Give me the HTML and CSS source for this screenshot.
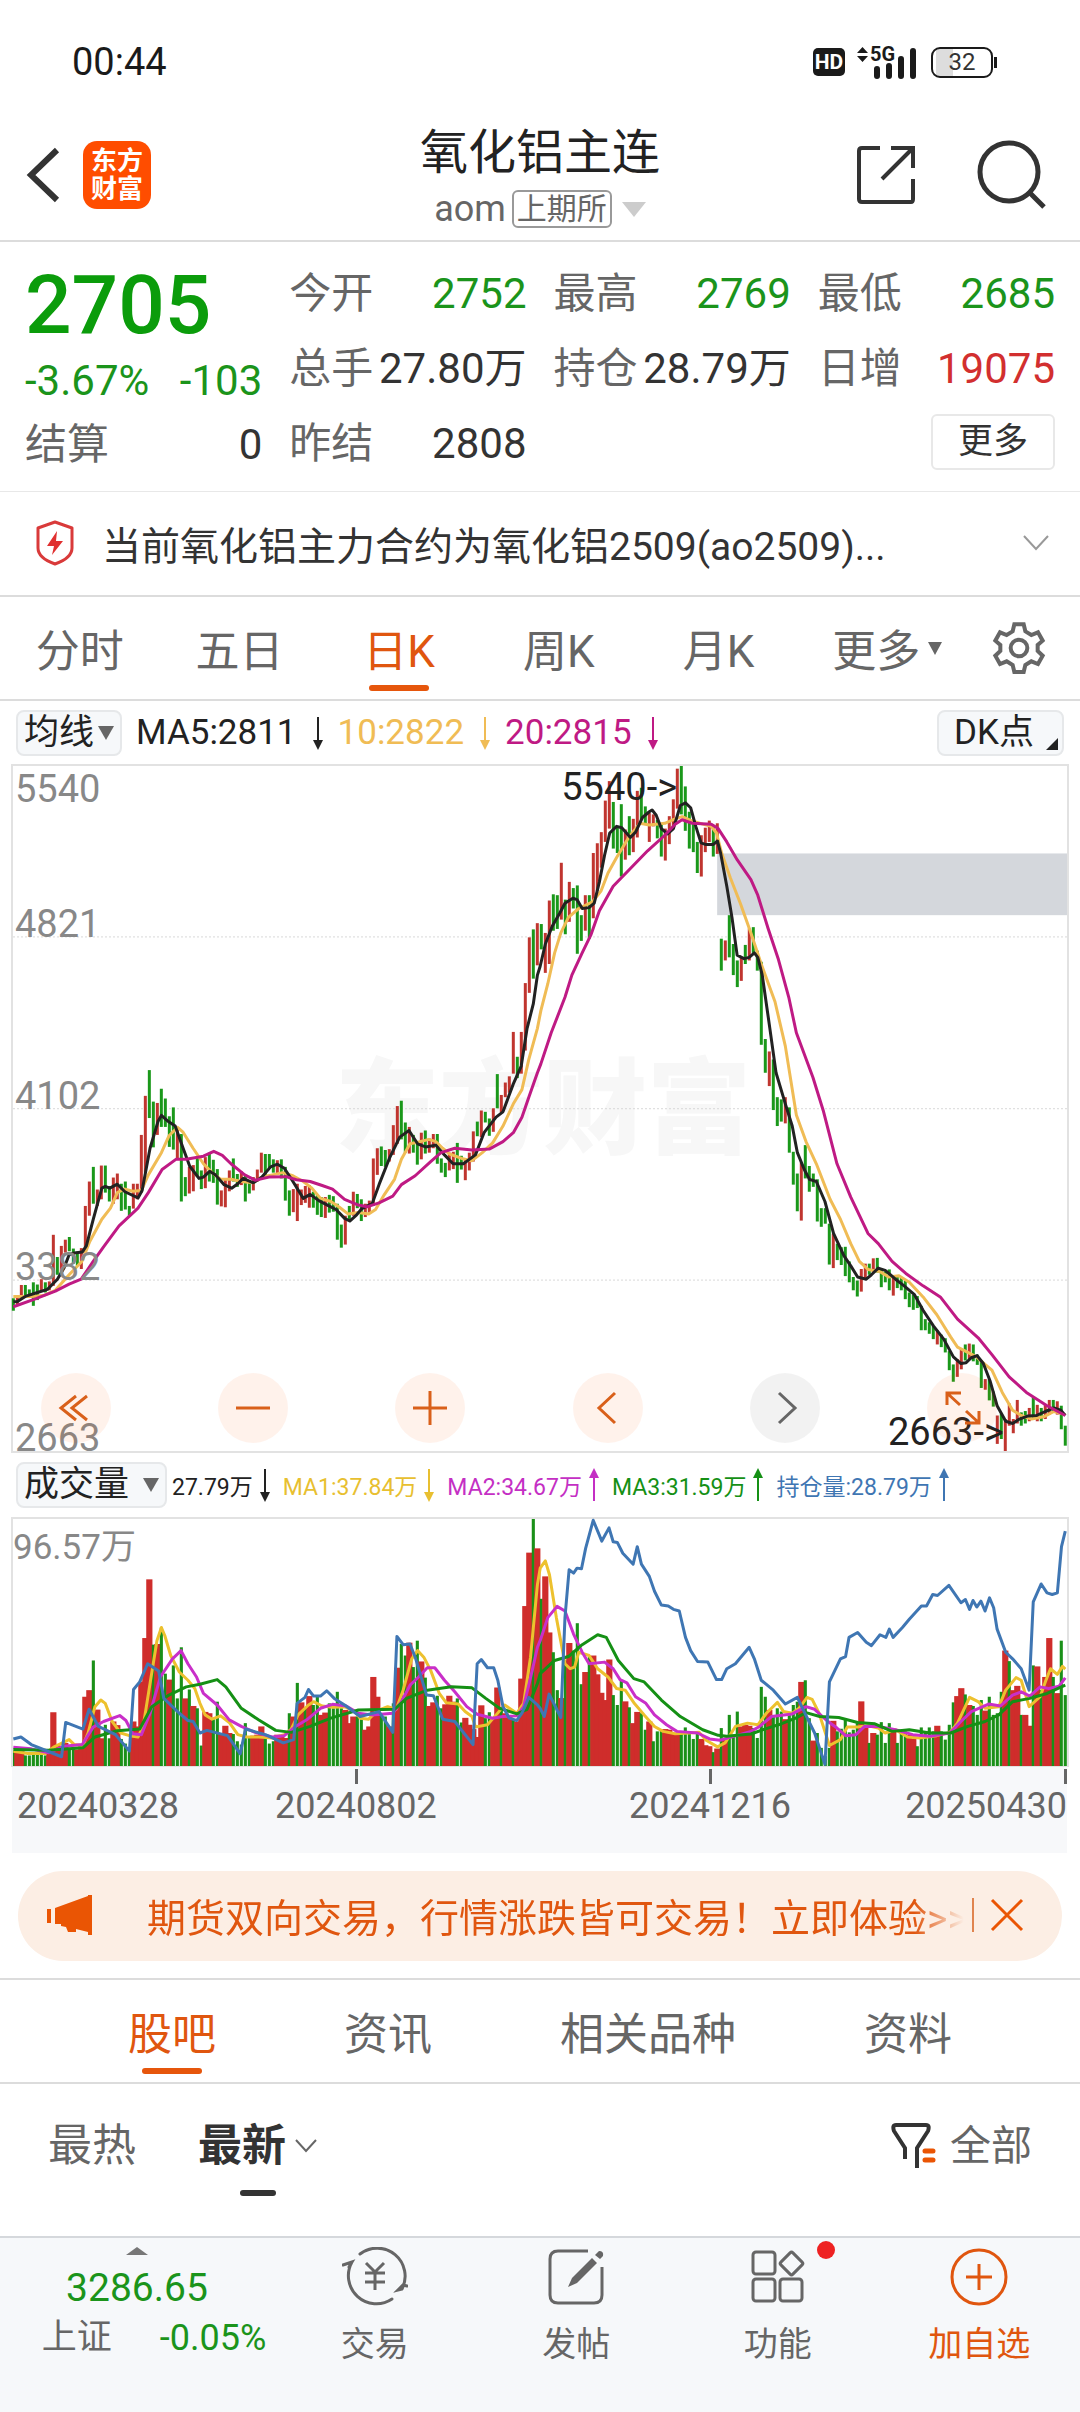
FILE: index.html
```html
<!DOCTYPE html>
<html lang="zh-CN">
<head>
  <meta charset="UTF-8">
  <meta name="viewport" content="width=device-width, initial-scale=1.0">
  <title>氧化铝主连</title>
  <link rel="stylesheet" href="styles.css">
</head>
<body>
  <div class="status">
    <span class="time">00:44</span>
    <div class="status-icons">
      <span class="hd">HD</span>
      <span class="signal">
        <svg width="62" height="36" viewBox="0 0 62 36">
          <path d="M0 9L5.500 3L11 9ZM0 12H11L5.500 18Z" fill="#1a1a1a"/>
          <path d="M20 25V32M32 22V32M44 15V32M56 7V32" stroke="#1a1a1a" stroke-width="6" stroke-linecap="round"/>
        </svg>
        <b>5G</b>
      </span>
      <span class="battery">32</span>
    </div>
  </div>

  <header>
    <div class="head-left">
      <button aria-label="返回">
        <svg width="36" height="56" viewBox="0 0 36 56"><path d="M31 3L5 28L31 53" fill="none" stroke="#333" stroke-width="6"/></svg>
      </button>
      <a class="logo" href="#">东方<br>财富</a>
    </div>
    <div class="head-title">
      <h1>氧化铝主连</h1>
      <div class="code">aom<span class="exchange">上期所</span><i class="tri"></i></div>
    </div>
    <div class="head-right">
      <button aria-label="分享">
        <svg width="60" height="60" viewBox="0 0 60 60" fill="none" stroke="#333" stroke-width="4"><path d="M24 3H6Q3 3 3 6V54Q3 57 6 57H55Q57 57 57 54V34M35 3H57V23M57 3L26 34"/></svg>
      </button>
      <button aria-label="搜索">
        <svg width="70" height="70" viewBox="0 0 70 70" fill="none" stroke="#333" stroke-width="5"><circle cx="33" cy="32" r="29"/><path d="M54 53L68 67"/></svg>
      </button>
    </div>
  </header>

  <section class="quote">
    <div class="quote-main">
      <strong class="price">2705</strong>
      <div class="change"><span>-3.67%</span><span>-103</span></div>
      <div class="cell"><span>结算</span><b>0</b></div>
    </div>
    <div class="quote-grid">
      <div class="cell"><span>今开</span><b class="down">2752</b></div>
      <div class="cell"><span>最高</span><b class="down">2769</b></div>
      <div class="cell"><span>最低</span><b class="down">2685</b></div>
      <div class="cell"><span>总手</span><b>27.80万</b></div>
      <div class="cell"><span>持仓</span><b>28.79万</b></div>
      <div class="cell"><span>日增</span><b class="up">19075</b></div>
      <div class="cell"><span>昨结</span><b>2808</b></div>
      <div class="cell cell-more"><button class="more">更多</button></div>
    </div>
  </section>

  <section class="notice">
    <svg width="42" height="48" viewBox="0 0 42 48">
      <path d="M21 3L38 9V29Q38 39 21 45Q4 39 4 29V9Z" fill="none" stroke="#d93a3a" stroke-width="3" stroke-linejoin="round"/>
      <path d="M23 12L13 27H20L18 36L29 22H22Z" fill="#e03030"/>
    </svg>
    <p>当前氧化铝主力合约为氧化铝2509(ao2509)...</p>
    <button aria-label="展开">
      <svg width="28" height="18" viewBox="0 0 28 18"><path d="M2 2L14 15L26 2" fill="none" stroke="#999" stroke-width="2"/></svg>
    </button>
  </section>

  <nav class="periods">
    <button>分时</button>
    <button>五日</button>
    <button class="active">日K</button>
    <button>周K</button>
    <button>月K</button>
    <button class="period-more">更多<i class="tri"></i></button>
    <button class="gear" aria-label="设置">
      <svg width="54" height="54" viewBox="34 34 162 162" fill="none" stroke="#666" stroke-width="12">
        <path d="M101 44H129L134 65L152 76L172 68L186 93L171 106V124L186 138L172 163L152 155L134 166L129 187H101L96 166L78 155L58 163L44 138L59 124V106L44 93L58 68L78 76L96 65Z"/>
        <circle cx="115" cy="115" r="25"/>
      </svg>
    </button>
  </nav>

  <div class="ma-row">
    <button class="chip">均线<i class="tri"></i></button>
    <span class="c-ma5">MA5:2811<svg class="arrow" viewBox="0 0 12 34"><path d="M6 1V28"/><path class="tip" d="M1 24H11L6 34Z"/></svg></span>
    <span class="c-ma10">10:2822<svg class="arrow" viewBox="0 0 12 34"><path d="M6 1V28"/><path class="tip" d="M1 24H11L6 34Z"/></svg></span>
    <span class="c-ma20">20:2815<svg class="arrow" viewBox="0 0 12 34"><path d="M6 1V28"/><path class="tip" d="M1 24H11L6 34Z"/></svg></span>
    <button class="chip dk">DK点<svg width="12" height="12" viewBox="0 0 12 12"><path d="M12 0V12H0Z" fill="#222"/></svg></button>
  </div>

  <section class="chart kline">
    <span class="watermark">东方财富</span>
    <svg id="kline" viewBox="37 9 3061 1543" preserveAspectRatio="none">
      <path class="grid" d="M37 394H3098M37 781H3098M37 1167H3098"/>
      <rect class="gap-band" x="2082" y="206" width="1016" height="139"/>
    </svg>
    <div class="y-labels">
      <span>5540</span><span>4821</span><span>4102</span><span>3382</span><span>2663</span>
    </div>
    <span class="mark mark-high">5540-&gt;</span>
    <span class="mark mark-low">2663-&gt;</span>
    <div class="controls">
      <button aria-label="最左"><svg viewBox="0 0 70 70"><path d="M35 23L20 35L35 47M46 23L31 35L46 47"/></svg></button>
      <button aria-label="缩小"><svg viewBox="0 0 70 70"><path d="M18 35H52"/></svg></button>
      <button aria-label="放大"><svg viewBox="0 0 70 70"><path d="M18 35H52M35 18V52"/></svg></button>
      <button aria-label="左移"><svg viewBox="0 0 70 70"><path d="M42 20L26 35L42 50"/></svg></button>
      <button aria-label="右移" class="off"><svg viewBox="0 0 70 70"><path d="M29 20L45 35L29 50"/></svg></button>
      <button aria-label="全屏"><svg viewBox="0 0 70 70"><path d="M20 32V20H34M21 21L33 32M52 38V50H38M51 49L39 38"/></svg></button>
    </div>
  </section>

  <div class="vol-row">
    <button class="chip">成交量<i class="tri"></i></button>
    <span class="c-vol">27.79万<svg class="arrow" viewBox="0 0 12 34"><path d="M6 1V28"/><path class="tip" d="M1 24H11L6 34Z"/></svg></span>
    <span class="c-v1">MA1:37.84万<svg class="arrow" viewBox="0 0 12 34"><path d="M6 1V28"/><path class="tip" d="M1 24H11L6 34Z"/></svg></span>
    <span class="c-v2">MA2:34.67万<svg class="arrow" viewBox="0 0 12 34"><path d="M6 6V33"/><path class="tip" d="M1 10H11L6 0Z"/></svg></span>
    <span class="c-v3">MA3:31.59万<svg class="arrow" viewBox="0 0 12 34"><path d="M6 6V33"/><path class="tip" d="M1 10H11L6 0Z"/></svg></span>
    <span class="c-oi">持仓量:28.79万<svg class="arrow" viewBox="0 0 12 34"><path d="M6 6V33"/><path class="tip" d="M1 10H11L6 0Z"/></svg></span>
  </div>

  <section class="chart volume">
    <svg id="volume" viewBox="37 201 3061 749" preserveAspectRatio="none"></svg>
    <span class="vol-max">96.57万</span>
  </section>
  <div class="dates">
    <span>20240328</span><span>20240802</span><span>20241216</span><span>20250430</span>
  </div>

  <section class="promo">
    <svg width="48" height="42" viewBox="0 0 48 42"><path d="M1 15H5V29H1ZM9 14L42 2V1H46V41H42V38L30 35V38H22L20 33L15 32V30H9Z" fill="#ea5504"/></svg>
    <a href="#">期货双向交易，行情涨跌皆可交易！立即体验&gt;&gt;</a>
    <button aria-label="关闭">
      <svg width="34" height="34" viewBox="0 0 34 34"><path d="M2 2L32 32M32 2L2 32" stroke="#ea5504" stroke-width="3"/></svg>
    </button>
  </section>

  <nav class="topics">
    <button class="active">股吧</button>
    <button>资讯</button>
    <button>相关品种</button>
    <button>资料</button>
  </nav>

  <div class="sort">
    <button>最热</button>
    <button class="active">最新<svg width="24" height="16" viewBox="0 0 24 16"><path d="M2 2L12 13L22 2" fill="none" stroke="#666" stroke-width="2"/></svg></button>
    <button class="filter">
      <svg width="46" height="48" viewBox="0 0 46 48" fill="none">
        <path d="M14 37V26L3 9Q1 3 5 3H35Q39 3 37 9L26 26V46" stroke="#333" stroke-width="4"/>
        <path d="M34 29H42M34 38H42" stroke="#ea5504" stroke-width="5" stroke-linecap="round"/>
      </svg>全部
    </button>
  </div>

  <footer>
    <a class="index" href="#">
      <i class="tri"></i>
      <b>3286.65</b>
      <span class="index-row"><span>上证</span><em>-0.05%</em></span>
    </a>
    <a href="#">
      <svg width="66" height="60" viewBox="0 0 66 60" fill="none" stroke="#666" stroke-width="3" stroke-linecap="round">
        <path d="M18 7A28 28 0 0 1 60 42M60 42L56 43L61 38L65 39M50 52A28 28 0 0 1 10 15M1 18L10 15L7 20"/>
        <path d="M24 16L33 25L42 16M23 26H43M23 35H43M33 26V43" stroke-linecap="butt"/>
      </svg>
      <span>交易</span>
    </a>
    <a href="#">
      <svg width="60" height="60" viewBox="0 0 60 60" fill="none" stroke="#666" stroke-width="3">
        <path d="M42 4H12Q4 4 4 12V48Q4 56 12 56H48Q56 56 56 48V20"/>
        <path d="M46 11L51 16L31 36L22 40L26 31ZM49 8L53 4Q58 4 57 9L54 12Z" fill="#666" stroke="none"/>
      </svg>
      <span>发帖</span>
    </a>
    <a href="#">
      <svg width="60" height="60" viewBox="0 0 60 60" fill="none" stroke="#666" stroke-width="3">
        <rect x="5" y="5" width="22" height="22" rx="3"/>
        <rect x="5" y="32" width="22" height="22" rx="3"/>
        <rect x="32" y="32" width="22" height="22" rx="3"/>
        <rect x="35" y="8" width="17" height="17" rx="2" transform="rotate(45 43.500 16.500)"/>
      </svg>
      <span>功能</span>
      <i class="dot"></i>
    </a>
    <a href="#" class="add">
      <svg width="60" height="60" viewBox="0 0 60 60" fill="none" stroke="#e0560f" stroke-width="3"><circle cx="30" cy="30" r="27"/><path d="M17 30H43M30 17V43"/></svg>
      <span>加自选</span>
    </a>
  </footer>

  <script src="chart.js"></script>
</body>
</html>
```
FILE: styles.css
```css
* { box-sizing: border-box; margin: 0; padding: 0; }
body {
  font-family: Roboto, 'Noto Sans CJK SC', sans-serif;
  background: #fff;
  color: #333;
  min-height: 100vh;
  display: flex;
  flex-direction: column;
}
button {
  font: inherit;
  color: inherit;
  background: none;
  border: none;
  cursor: pointer;
}
a { color: inherit; text-decoration: none; }
b, em, i { font-weight: 400; font-style: normal; }
svg { display: block; flex: none; }
.tri {
  display: inline-block;
  border: 8px solid transparent;
  border-top: 14px solid #666;
  border-bottom: 0;
}

/* status bar */
.status {
  height: 110px;
  padding: 14px 87px 0 72px;
  display: flex;
  align-items: center;
  justify-content: space-between;
}
.time { font-size: 38px; color: #1a1a1a; }
.status-icons { display: flex; align-items: center; gap: 12px; }
.hd {
  width: 32px;
  background: #1a1a1a;
  border-radius: 5px;
  color: #fff;
  font-size: 21px;
  font-weight: 700;
  line-height: 28px;
  text-align: center;
}
.signal { position: relative; }
.signal b {
  position: absolute;
  left: 13px;
  top: 0;
  font-size: 20px;
  font-weight: 700;
  line-height: 20px;
  color: #1a1a1a;
}
.battery {
  position: relative;
  width: 62px;
  border: 2px solid #1a1a1a;
  border-radius: 9px;
  font-size: 24px;
  line-height: 27px;
  text-align: center;
  background: linear-gradient(90deg, #fff 3px, #ddd 3px, #ddd 20px, #fff 20px);
}
.battery::after {
  content: '';
  position: absolute;
  right: -6px;
  top: 8px;
  width: 3px;
  height: 11px;
  background: #1a1a1a;
}

/* header */
header {
  height: 132px;
  padding: 0 26px;
  display: grid;
  grid-template-columns: 1fr auto 1fr;
  align-items: center;
  border-bottom: 2px solid #dcdcdc;
}
.head-left, .head-right { display: flex; align-items: center; gap: 21px; }
.head-right { justify-content: flex-end; gap: 60px; padding-right: 8px; }
.logo {
  width: 68px;
  padding: 6px 0;
  border-radius: 14px;
  background: #ff4d00;
  color: #fff;
  font-size: 26px;
  font-weight: 700;
  line-height: 28px;
  text-align: center;
}
.head-title { text-align: center; padding-top: 8px; }
.head-title h1 { font-size: 48px; font-weight: 400; line-height: 60px; color: #222; }
.code {
  display: flex;
  align-items: center;
  justify-content: center;
  font-size: 36px;
  line-height: 52px;
  color: #666;
}
.exchange {
  margin: 0 10px 0 6px;
  padding: 0 3px;
  border: 2px solid #999;
  border-radius: 6px;
  font-size: 30px;
  line-height: 34px;
}
.code .tri { border-width: 15px 12px 0; border-top-color: #ccc; }

/* quote */
.quote {
  padding: 14px 25px 10px;
  display: grid;
  grid-template-columns: repeat(4, 1fr);
  column-gap: 27px;
  border-bottom: 1px solid #e8e8e8;
}
.quote-grid {
  grid-column: 2 / 5;
  display: grid;
  grid-template-columns: repeat(3, 1fr);
  grid-auto-rows: 75px;
  column-gap: 27px;
}
.price {
  display: block;
  font-size: 82px;
  font-weight: 500;
  line-height: 98px;
  color: #0b9c0b;
}
.change {
  display: flex;
  justify-content: space-between;
  font-size: 42px;
  line-height: 54px;
  color: #1b941b;
}
.cell {
  display: flex;
  justify-content: space-between;
  align-items: center;
  font-size: 42px;
  line-height: 73px;
  white-space: nowrap;
}
.cell span { color: #666; }
.cell .down { color: #1b941b; }
.cell .up { color: #d22f2f; }
.cell-more { grid-column: 3; justify-content: flex-end; }
.more {
  width: 124px;
  height: 56px;
  margin-bottom: 4px;
  border: 2px solid #e8e8e8;
  border-radius: 6px;
  font-size: 35px;
  line-height: 50px;
}

/* notice */
.notice {
  height: 105px;
  padding: 0 30px 2px 34px;
  display: flex;
  align-items: center;
  gap: 26px;
  border-bottom: 2px solid #dcdcdc;
}
.notice p { flex: 1; font-size: 39px; }

/* period tabs */
.periods {
  height: 104px;
  padding-right: 34px;
  display: grid;
  grid-template-columns: repeat(6, 1fr) 88px;
  border-bottom: 2px solid #dcdcdc;
  font-size: 44px;
  color: #666;
}
.periods button, .topics button {
  position: relative;
  display: flex;
  align-items: center;
  justify-content: center;
}
.periods .tri { margin-left: 8px; border-width: 13px 7px 0; }
.periods .period-more { padding-left: 18px; }
.periods .gear { justify-content: flex-end; }
.active { color: #e0560f; }
.periods .active::after, .topics .active::after {
  content: '';
  position: absolute;
  left: 50%;
  bottom: 8px;
  width: 60px;
  height: 6px;
  margin-left: -30px;
  border-radius: 3px;
  background: #e6560c;
}

/* indicator rows */
.ma-row, .vol-row {
  height: 63px;
  padding: 0 16px;
  display: flex;
  align-items: center;
  gap: 14px;
  font-size: 35px;
  white-space: nowrap;
}
.ma-row span, .vol-row span { display: flex; align-items: center; }
.chip {
  height: 46px;
  padding: 0 6px;
  display: flex;
  align-items: center;
  gap: 4px;
  border: 2px solid #e6e8ea;
  border-radius: 8px;
  background: #f6f8fa;
  color: #222;
  font-size: 35px;
  line-height: 42px;
}
.dk { margin-left: auto; padding: 0 4px 0 15px; gap: 12px; }
.dk svg { align-self: flex-end; margin-bottom: 4px; }
.arrow {
  width: 12px;
  height: 34px;
  margin-left: 15px;
  fill: none;
  stroke: currentColor;
  stroke-width: 2;
}
.arrow .tip { fill: currentColor; stroke: none; }
.c-ma5, .c-vol { color: #222; }
.c-ma10 { color: #f0bc55; }
.c-ma20 { color: #bf1a84; }
.c-v1 { color: #e8bf30; }
.c-v2 { color: #c42fc4; }
.c-v3 { color: #159015; }
.c-oi { color: #3f76b3; }
.vol-row { height: 64px; gap: 12px; font-size: 23px; }
.vol-row .chip { gap: 14px; margin-right: -7px; }
.vol-row .arrow { margin-left: 6px; }

/* charts */
.chart {
  position: relative;
  margin: 0 11px;
  border: 2px solid #e2e2e2;
}
.chart > svg { position: relative; width: 100%; height: 100%; overflow: visible; }
.kline { height: 689px; }
.volume { height: 250px; border-bottom-width: 1px; }
.chart path, .chart polyline { fill: none; vector-effect: non-scaling-stroke; }
.chart .grid { stroke: #d8d8d8; stroke-width: 1; stroke-dasharray: 2 2; }
.gap-band { fill: #d4d7dc; }
.chart .red { stroke: #c0352f; stroke-width: 3; }
.chart .green { stroke: #1a981a; stroke-width: 3; }
.bar-red { fill: #cf2d2b; }
.bar-green { fill: #1a9018; }
.chart polyline { stroke-width: 3; stroke-linejoin: round; }
.watermark {
  position: absolute;
  left: 322px;
  top: 270px;
  font-size: 104px;
  font-weight: 900;
  line-height: 150px;
  color: #f7f7f7;
}
.y-labels span {
  position: absolute;
  left: 2px;
  font-size: 38px;
  line-height: 38px;
  color: #888;
}
.y-labels span:nth-child(1) { top: 4px; }
.y-labels span:nth-child(2) { bottom: 75%; }
.y-labels span:nth-child(3) { bottom: 50%; }
.y-labels span:nth-child(4) { bottom: 25%; }
.y-labels span:nth-child(5) { bottom: 0; }
.y-labels span { margin-bottom: -6px; }
.mark {
  position: absolute;
  font-size: 38px;
  line-height: 38px;
  color: #222;
}
.mark-high { right: 37%; top: 2px; }
.mark-low { right: 6%; bottom: 0; }
.controls {
  position: absolute;
  left: 28px;
  right: 70px;
  bottom: 8px;
  display: flex;
  justify-content: space-between;
}
.controls button {
  width: 70px;
  height: 70px;
  border-radius: 50%;
  background: rgba(255, 90, 0, 0.08);
}
.controls path { stroke: #d9601a; stroke-width: 3; }
.controls .off { background: rgba(0, 0, 0, 0.05); }
.controls .off path { stroke: #666; }
.vol-max {
  position: absolute;
  left: 0;
  top: 8px;
  font-size: 35px;
  line-height: 42px;
  color: #888;
}
.dates {
  height: 86px;
  margin: 0 13px 0 12px;
  padding-top: 17px;
  display: grid;
  grid-template-columns: 162fr 356fr 356fr 181fr;
  justify-items: center;
  background: #f7f8fa;
  font-size: 36px;
  line-height: 44px;
  color: #666;
}
.dates span { position: relative; }
.dates span:first-child { justify-self: start; padding-left: 5px; }
.dates span:last-child { justify-self: end; }
.dates span:nth-child(n+2)::before {
  content: '';
  position: absolute;
  left: 50%;
  top: -15px;
  width: 3px;
  height: 15px;
  margin-left: -1px;
  background: #666;
}
.dates span:last-child::before { left: auto; right: 0; }

/* promo */
.promo {
  height: 90px;
  margin: 18px 18px 17px;
  padding: 0 38px 2px 28px;
  display: flex;
  align-items: center;
  border-radius: 45px;
  background: #fceee4;
}
.promo a {
  flex: 1;
  margin-left: 53px;
  white-space: nowrap;
  font-size: 39px;
  color: #e0560f;
  -webkit-mask-image: linear-gradient(90deg, #000 93%, transparent 99%);
  mask-image: linear-gradient(90deg, #000 93%, transparent 99%);
}
.promo button { padding-left: 16px; border-left: 2px solid #e0844f; }

/* topics */
.topics {
  height: 106px;
  display: flex;
  justify-content: space-evenly;
  border-top: 2px solid #dcdcdc;
  border-bottom: 2px solid #dcdcdc;
  font-size: 44px;
  color: #666;
}
.sort {
  flex: 1;
  padding: 30px 48px 0;
  display: flex;
  align-items: flex-start;
  gap: 62px;
  font-size: 44px;
  line-height: 64px;
  color: #666;
}
.sort button { position: relative; display: flex; align-items: center; }
.sort .active { gap: 8px; color: #333; font-weight: 700; }
.sort .active::after {
  content: '';
  position: absolute;
  left: 50%;
  bottom: -18px;
  width: 36px;
  height: 6px;
  margin-left: -18px;
  border-radius: 3px;
  background: #333;
}
.sort .filter { margin-left: auto; gap: 13px; font-size: 41px; }

/* bottom bar */
footer {
  height: 176px;
  padding-top: 9px;
  display: grid;
  grid-template-columns: 274px repeat(4, 1fr);
  background: #f6f8fa;
  border-top: 2px solid #d5d8dc;
  font-size: 34px;
  line-height: 50px;
  color: #666;
}
footer a {
  position: relative;
  display: flex;
  flex-direction: column;
  align-items: center;
}
footer a > span { margin-top: 12px; }
footer .index .tri { border-width: 0 11px 8px; border-style: solid; border-color: transparent transparent #777; }
.index b { margin-top: 8px; font-size: 39px; color: #1b941b; }
.index .index-row { display: flex; gap: 48px; margin-top: 0; padding-left: 34px; font-size: 35px; }
.index em { font-size: 36px; color: #1b941b; }
.add { color: #e0560f; }
.dot {
  position: absolute;
  left: 50%;
  top: -6px;
  width: 18px;
  height: 18px;
  margin-left: 39px;
  border-radius: 50%;
  background: #ee2222;
}
```
FILE: chart.js
```js
const NS = 'http://www.w3.org/2000/svg';
const START = 38;
const STEP = 11.616;
const BASE = 950;

// one entry per trading day: colour, top, bottom
const candles = `g1208,1236 r1203,1222 r1178,1205 g1178,1205 g1188,1205 g1172,1225 g1177,1212 r1165,1192 g1172,1195 r1170,1190
r1065,1180 g1115,1155 r1090,1158 r1076,1105 g1070,1102 g1096,1130 g1103,1135 r1095,1142 r1000,1110 r945,1022
g912,995 r963,1000 r909,985 g909,970 g955,990 r936,995 r927,985 g950,1011 g945,1008 g1000,1022
r950,1006 r950,985 r840,970 r752,925 g694,802 g765,868 r768,840 g736,822 g758,822 g798,867
g778,873 r825,892 g838,990 g935,978 r912,972 r908,967 g890,935 g920,962 r890,960 g880,945
g896,948 g917,997 r965,1001 r940,1003 r920,967 g893,945 g928,957 r922,953 g932,990 g945,972
r935,965 r918,945 r880,925 g883,930 g883,915 g895,925 r897,930 g895,938 g912,988 g965,1022
r962,1014 r950,1034 r963,998 r955,993 r953,1004 g968,1004 g975,1020 g980,1025 r980,1027 g975,1015
g978,1013 g995,1076 g1042,1094 r1022,1087 g1000,1030 r968,1022 g973,1005 g985,1034 r995,1025 r988,1015
r893,1000 r870,930 g866,910 g874,912 r872,900 r818,885 r775,860 g763,850 g812,880 r822,882
g840,880 g855,907 r835,895 g830,882 r848,880 r838,870 g838,905 g893,925 g903,935 r880,920
r878,917 g858,948 g887,918 r892,942 r880,920 r832,900 g810,843 r785,845 g788,812 g803,842
r780,833 g703,780 r750,790 r722,755 r708,745 r608,702 g664,712 r608,702 r498,650 r395,520
g377,488 r363,458 g365,422 r385,475 r312,455 g298,380 g300,376 r227,355 g310,388 r270,360
g284,330 g278,432 g345,403 r300,380 g300,398 r205,352 r183,290 r158,238 r87,180 r43,150
g90,195 g148,205 g95,258 r152,220 g122,210 r128,203 r65,170 g58,130 g100,140 r115,180
r118,145 g130,172 g140,213 r150,222 r122,185 r84,145 r15,105 g9,118 g55,155 g112,195
g135,203 g180,250 r165,258 r148,203 r132,180 g145,213 r138,207 g398,470 r402,447 g345,440
g410,480 g447,507 r440,493 g412,455 r375,447 g372,430 g425,470 g450,637 g624,700 r652,730
g670,784 g755,820 g760,810 r755,814 g778,880 g878,952 g927,1012 r902,1033 g863,938 g910,968
g927,957 g940,1035 g1005,1047 g1005,1040 g1040,1132 r1062,1140 g1085,1122 g1093,1133 g1092,1158 g1125,1172
g1160,1190 g1168,1204 r1142,1193 r1130,1165 g1130,1155 r1118,1150 g1117,1150 g1140,1183 g1148,1172 g1143,1190
r1158,1202 g1160,1185 g1162,1190 g1168,1210 g1195,1228 g1200,1234 g1203,1230 g1225,1280 g1255,1280 g1262,1288
g1270,1300 r1280,1312 g1290,1318 g1298,1330 g1327,1370 g1357,1396 r1345,1385 r1322,1368 g1312,1348 r1310,1345
g1312,1350 g1335,1358 g1350,1410 r1390,1414 g1390,1438 g1418,1452 r1472,1536 g1468,1525 r1480,1552 r1445,1495
r1480,1512 r1437,1490 g1465,1495 g1462,1490 r1455,1485 g1430,1480 r1448,1485 g1455,1485 r1448,1480 r1437,1470
g1437,1465 r1440,1470 g1450,1503 g1495,1540`;

// one entry per trading day: colour, top
const volumes = `g905 r905 r905 g918 g918 g915 g915 g915 g918 r905 r787 r885 r890 r880 g895 g893 r900 r890 r740 r720
g630 r779 r866 g825 g866 r815 r826 g868 g882 g900 r815 r830 r694 r562 r384 g582 r580 g530 g670 r688
g645 g745 g590 r745 g718 r768 g775 g888 r786 r790 g808 g755 r850 r828 r850 g853 g875 g885 g820 g865
r858 r855 r830 g865 g882 g875 r855 r858 r865 g790 r800 g698 r757 g775 r738 g765 g740 r795 r788 g760
g775 g725 g775 r780 r820 r800 g800 g808 r840 r830 r680 r740 g790 g800 r830 g760 r652 g580 g615 r576
g650 g570 r633 g682 r768 r757 g737 g775 r763 r737 r755 g745 g818 r804 r825 r838 r862 r766 g805 g787
r803 r712 g775 r790 r800 g808 r815 r685 r465 r303 g201 r290 g443 r375 r545 g605 g720 r744 g630 r577
g600 g517 g702 r665 g620 r615 r672 r728 r750 r627 g735 g765 g690 r754 g772 r820 r786 g790 g840 r815
g875 g845 g843 r838 r840 r853 r853 g850 g833 g850 g868 g848 r868 r887 r890 g908 r897 g835 r870 g795
g855 g785 r830 r825 r828 g835 g865 g710 g740 r780 g800 g775 g785 r808 g795 g765 g755 r695 g690 g805
r873 g850 g895 g920 g895 r813 g845 g837 g805 g848 g840 g820 r754 r833 g880 r850 g855 g817 g880 g820
r837 g880 g845 g845 r855 r868 g890 g833 g845 g833 g845 r828 g845 g870 g825 g757 r738 r714 g733 r765
g768 g795 g750 r782 g740 g795 g790 g725 r600 g632 r720 r707 g795 r795 r828 g645 r648 g720 r680 r562
g680 r729 g570 g735`;

const klineLines = {
  '#f0bc55': '38,1204 90,1204 125,1202 160,1190 200,1155 237,1125 260,1080 295,1030 320,1005 340,970 360,962 385,967 410,965 430,930 468,880 490,842 515,823 530,833 560,870 590,905 615,925 640,940 670,940 700,945 735,948 760,935 790,930 820,925 850,932 880,945 905,960 930,983 960,990 985,1003 1010,1018 1040,1015 1070,1018 1090,1008 1115,975 1145,940 1165,895 1190,860 1215,856 1245,850 1265,855 1285,870 1305,883 1340,893 1370,898 1400,880 1430,858 1460,820 1490,770 1515,738 1535,670 1560,600 1570,560 1590,500 1610,430 1628,385 1650,350 1680,330 1720,315 1745,290 1765,250 1790,215 1825,170 1858,138 1885,142 1930,138 1960,128 1980,123 2010,133 2040,140 2065,145 2080,160 2095,205 2120,260 2150,320 2180,385 2210,455 2250,540 2280,640 2312,795 2340,855 2370,905 2410,985 2440,1030 2470,1085 2495,1125 2520,1143 2555,1148 2580,1160 2610,1157 2640,1172 2680,1205 2720,1245 2760,1295 2780,1318 2810,1330 2835,1340 2860,1357 2880,1370 2910,1420 2940,1460 2965,1472 2995,1480 3030,1475 3060,1463 3093,1470',
  '#222222': '38,1216 50,1215 75,1203 108,1195 137,1188 166,1165 185,1140 200,1110 215,1106 238,1104 250,1090 270,1030 295,960 305,956 318,960 340,951 362,968 400,982 412,965 435,870 458,810 468,796 485,808 508,820 530,868 550,910 577,938 590,935 608,922 625,930 650,952 672,960 690,950 705,938 720,943 735,948 760,935 785,912 805,906 825,915 850,945 880,983 900,974 925,988 950,998 975,1008 1000,1028 1015,1034 1035,1020 1050,1006 1080,995 1100,952 1130,893 1160,845 1187,830 1212,860 1235,867 1265,863 1290,885 1315,905 1345,905 1380,885 1405,835 1440,800 1460,788 1490,725 1513,685 1530,600 1548,545 1560,480 1568,460 1583,410 1603,370 1625,340 1640,318 1663,307 1675,310 1690,330 1710,328 1725,318 1740,270 1755,210 1770,160 1790,145 1805,148 1830,170 1845,158 1865,125 1885,112 1893,108 1905,120 1920,150 1938,162 1955,150 1975,98 1990,92 2005,103 2020,145 2035,182 2050,186 2070,186 2083,178 2092,205 2110,280 2125,350 2140,435 2160,443 2175,440 2190,430 2200,440 2213,480 2235,600 2253,700 2280,770 2300,820 2315,880 2335,918 2350,940 2370,945 2395,990 2420,1062 2450,1112 2470,1135 2490,1160 2515,1165 2530,1155 2550,1140 2570,1145 2600,1165 2625,1180 2655,1200 2680,1235 2710,1270 2740,1300 2768,1340 2790,1355 2805,1353 2820,1342 2837,1337 2855,1355 2875,1395 2895,1450 2920,1485 2940,1490 2960,1480 2985,1473 3010,1472 3035,1463 3060,1455 3080,1460 3093,1472',
  '#bf1a84': '38,1227 100,1210 160,1192 200,1176 235,1165 270,1125 300,1092 345,1045 400,1005 430,970 470,918 510,895 540,895 590,888 620,877 645,886 670,905 710,930 740,942 780,935 830,934 860,941 900,945 935,954 965,962 1000,985 1040,998 1065,1002 1100,993 1140,978 1165,952 1205,932 1250,900 1280,880 1320,870 1370,874 1420,872 1460,855 1490,835 1515,800 1535,755 1560,700 1570,680 1600,610 1640,530 1660,480 1690,430 1715,390 1740,335 1780,280 1830,240 1880,200 1930,165 1960,140 1980,130 2010,138 2065,140 2085,150 2110,180 2140,220 2180,265 2200,300 2230,375 2260,445 2290,530 2312,610 2360,710 2390,785 2430,905 2470,980 2520,1062 2550,1085 2590,1125 2630,1152 2680,1180 2730,1205 2780,1255 2840,1297 2880,1335 2930,1385 2980,1420 3040,1450 3093,1472'
};

const volumeLines = {
  '#edc12e': '38,905 80,912 130,912 155,893 200,870 215,885 240,888 255,850 275,770 292,750 305,760 325,815 350,850 375,858 400,862 415,830 435,700 455,570 468,530 478,555 495,615 520,665 545,690 565,715 580,760 595,795 615,808 640,798 665,818 690,855 715,862 750,862 790,865 825,855 845,838 865,795 895,765 910,755 935,768 965,772 1000,770 1030,785 1045,805 1070,808 1095,782 1125,770 1150,778 1170,720 1195,625 1212,600 1230,620 1250,660 1275,730 1295,758 1330,762 1350,785 1370,800 1380,832 1415,825 1440,795 1465,765 1500,790 1520,760 1540,620 1560,400 1568,350 1583,328 1595,370 1615,500 1640,640 1655,655 1668,650 1680,605 1710,615 1735,655 1765,680 1790,715 1815,720 1840,758 1870,795 1900,830 1925,845 1960,852 2000,850 2030,848 2050,872 2083,892 2105,880 2135,830 2170,820 2200,825 2225,790 2257,757 2275,785 2300,790 2320,775 2343,742 2358,748 2378,790 2408,888 2440,870 2460,832 2490,832 2520,828 2550,835 2570,850 2600,840 2635,862 2670,865 2720,858 2758,848 2780,820 2815,742 2840,755 2860,775 2900,770 2920,720 2950,682 2965,690 2988,770 3020,740 3035,695 3050,655 3070,672 3085,648 3093,656',
  '#c92fc9': '38,893 90,898 140,910 185,890 238,885 270,832 300,815 347,797 365,812 385,852 410,855 435,790 465,680 500,625 525,600 545,640 570,680 590,730 630,765 665,810 700,830 740,848 790,862 825,858 855,832 890,810 930,775 965,763 1005,768 1040,790 1080,795 1140,790 1165,755 1190,705 1215,680 1240,652 1262,652 1290,690 1320,725 1355,770 1385,793 1430,805 1460,800 1500,798 1520,770 1545,660 1560,590 1568,570 1590,500 1617,466 1640,480 1665,550 1690,605 1710,640 1755,635 1780,655 1800,688 1820,698 1845,740 1875,760 1900,795 1935,825 1965,845 2025,850 2060,868 2090,872 2130,860 2180,845 2205,830 2240,800 2300,792 2340,770 2365,778 2400,812 2430,835 2455,858 2485,855 2510,830 2550,830 2600,840 2650,855 2700,860 2758,850 2790,815 2820,785 2870,762 2905,768 2940,735 2965,725 2990,738 3020,710 3045,715 3075,708 3093,683',
  '#159015': '38,900 140,902 240,895 275,862 340,843 405,838 440,770 490,735 540,710 580,702 630,688 655,710 700,775 750,810 800,842 845,848 900,830 960,805 1040,780 1145,778 1180,745 1240,720 1310,710 1370,713 1410,745 1450,775 1500,792 1530,778 1560,700 1568,670 1610,630 1650,618 1690,582 1735,552 1760,560 1795,630 1840,685 1870,695 1920,750 1975,800 2040,840 2085,857 2110,860 2180,853 2220,838 2260,825 2310,805 2340,788 2380,800 2435,803 2490,818 2540,822 2590,845 2640,840 2700,850 2760,850 2810,830 2860,815 2900,795 2940,755 2990,745 3040,730 3093,705',
  '#3f76b3': '38,868 60,862 90,885 125,900 178,922 190,818 240,838 258,778 285,830 335,855 375,905 387,718 405,695 428,640 460,662 475,745 520,790 545,812 560,815 580,850 600,842 660,858 697,913 712,838 770,855 822,880 852,870 862,760 885,742 895,718 910,738 930,738 948,722 970,745 1000,765 1045,800 1100,785 1140,848 1152,557 1170,582 1190,580 1205,620 1238,735 1258,737 1285,808 1320,815 1373,885 1385,640 1397,627 1415,652 1433,652 1445,690 1460,770 1478,805 1500,812 1515,790 1535,742 1560,765 1568,775 1580,800 1594,732 1628,803 1640,500 1652,355 1665,365 1675,350 1688,352 1700,290 1722,205 1747,268 1768,228 1780,270 1792,272 1808,305 1838,338 1850,285 1862,338 1885,375 1900,420 1920,462 1940,465 1955,475 1972,480 1990,560 2005,600 2025,633 2055,635 2080,688 2095,688 2110,655 2135,640 2175,590 2190,625 2210,690 2245,720 2280,762 2315,742 2330,775 2365,850 2395,945 2408,695 2440,625 2455,618 2465,560 2490,545 2515,575 2530,585 2555,552 2572,560 2582,535 2593,560 2620,530 2640,505 2675,465 2690,465 2708,430 2722,433 2755,402 2790,455 2803,445 2815,475 2825,448 2836,468 2848,450 2860,480 2873,440 2885,470 2895,535 2920,605 2940,625 2965,655 2988,720 3000,452 3023,398 3040,425 3055,430 3070,425 3082,285 3093,238'
};

function add(parent, tag, attrs) {
  const el = document.createElementNS(NS, tag);
  for (const key in attrs) el.setAttribute(key, attrs[key]);
  parent.appendChild(el);
}

function drawLines(svg, lines) {
  for (const color in lines) {
    add(svg, 'polyline', { points: lines[color], stroke: color });
  }
}

const kline = document.getElementById('kline');
candles.split(/\s+/).forEach((item, i) => {
  const [top, bottom] = item.slice(1).split(',');
  const x = START + i * STEP;
  add(kline, 'path', { d: `M${x} ${top}V${bottom}`, class: item[0] === 'r' ? 'red' : 'green' });
});
drawLines(kline, klineLines);

const volume = document.getElementById('volume');
volumes.split(/\s+/).forEach((item, i) => {
  const top = Number(item.slice(1));
  const red = item[0] === 'r';
  const width = red ? 18 : 9;
  add(volume, 'rect', {
    x: Math.max(37, START + i * STEP - width / 2),
    y: top,
    width: width,
    height: BASE - top,
    class: red ? 'bar-red' : 'bar-green'
  });
});
drawLines(volume, volumeLines);
```
